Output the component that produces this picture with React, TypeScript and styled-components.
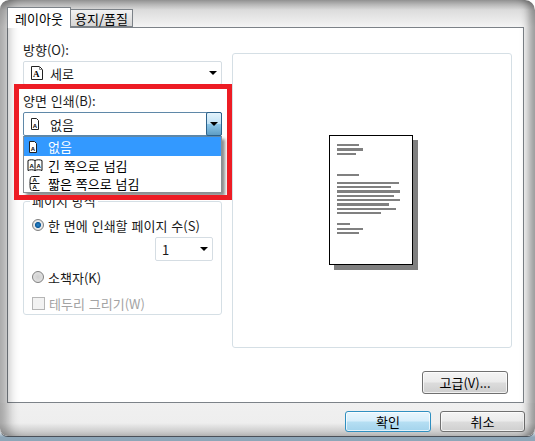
import React from "react";
import styled, { createGlobalStyle } from "styled-components";

const GlobalStyle = createGlobalStyle`
  html, body {
    margin: 0;
    padding: 0;
    background: #fff;
  }
  body {
    font-family: "Noto Sans CJK KR", "Noto Sans", sans-serif;
    font-size: 13px;
    word-spacing: 1px;
    color: #1a1a1a;
  }
`;

const Page = styled.div`
  position: relative;
  width: 535px;
  height: 441px;
  overflow: hidden;
  background: linear-gradient(to bottom, #ffffff 430px, #8ea6b8 437px);
`;

const Window = styled.div`
  position: relative;
  display: flex;
  flex-direction: column;
  width: 535px;
  height: 437px;
  box-sizing: border-box;
  padding: 7px 11px 0 7px;
  border-radius: 9px 10px 8px 8px;
  border-bottom: 1px solid #4a5058;
  background: linear-gradient(to bottom, #989898 0, #dcdcdc 10px, #f4f4f4 27px);
  overflow: hidden;

  &::after {
    content: "";
    position: absolute;
    inset: 0;
    pointer-events: none;
    border-radius: inherit;
    box-shadow:
      inset 16px 0 12px -8px rgba(0, 0, 0, 0.32),
      inset -12px 0 8px -6px rgba(0, 0, 0, 0.38);
  }
`;

const TabBar = styled.div`
  display: flex;
  align-items: flex-end;
  height: 20px;
`;

const Tab = styled.div<{ $active?: boolean }>`
  display: flex;
  align-items: center;
  justify-content: center;
  box-sizing: border-box;
  width: ${(p) => (p.$active ? "64px" : "62px")};
  height: ${(p) => (p.$active ? "21px" : "18px")};
  margin-bottom: ${(p) => (p.$active ? "-1px" : "0")};
  border: 1px solid #7c8288;
  border-bottom: ${(p) => (p.$active ? "none" : "1px solid #7c8288")};
  border-left: ${(p) => (p.$active ? "1px solid #7c8288" : "none")};
  background: ${(p) =>
    p.$active ? "#fff" : "linear-gradient(to bottom, #f2f2f2, #d6d6d6)"};
  color: #000;
  position: relative;
  z-index: ${(p) => (p.$active ? 1 : 0)};
`;

const Panel = styled.div`
  display: flex;
  gap: 10px;
  box-sizing: border-box;
  height: 376px;
  padding: 14px 11px 0 15px;
  background: #fff;
  border: 1px solid #7c8288;
`;

const LeftColumn = styled.div`
  display: flex;
  flex-direction: column;
  width: 199px;
`;

const RightColumn = styled.div`
  display: flex;
  flex-direction: column;
  align-items: flex-end;
  width: 280px;
  padding-top: 11px;
`;

const FieldLabel = styled.div`
  height: 16px;
  line-height: 16px;
  margin-bottom: 3px;
`;

const Field = styled.div`
  margin-bottom: 8px;
`;

const SelectBox = styled.div<{ $open?: boolean; $w?: number }>`
  position: relative;
  display: flex;
  align-items: center;
  box-sizing: border-box;
  width: ${(p) => (p.$w ? `${p.$w}px` : "100%")};
  height: 24px;
  padding-left: 6px;
  gap: 6px;
  background: #fff;
  border: 1px solid ${(p) => (p.$open ? "#5f88a8" : "#d5dde3")};
  border-radius: 2px;
`;

const Arrow = styled.span`
  position: absolute;
  right: 4px;
  top: 9px;
  width: 0;
  height: 0;
  border-left: 4px solid transparent;
  border-right: 4px solid transparent;
  border-top: 4px solid #000;
`;

const ArrowButton = styled.span`
  position: absolute;
  right: -1px;
  top: -1px;
  bottom: -1px;
  width: 16px;
  box-sizing: border-box;
  border: 1px solid #2c628b;
  border-radius: 2px;
  background: linear-gradient(to bottom, #e3f3fc 0, #c1e2f5 48%, #8cc6e8 52%, #5e9dc4 100%);

  &::after {
    content: "";
    position: absolute;
    left: 3px;
    top: 9px;
    border-left: 4px solid transparent;
    border-right: 4px solid transparent;
    border-top: 4px solid #000;
  }
`;

const DropList = styled.div`
  position: absolute;
  z-index: 2;
  left: -1px;
  top: 23px;
  width: 199px;
  box-sizing: border-box;
  background: #fff;
  border: 1px solid #8a8f94;
  border-top-color: #5f88a8;
  box-shadow: 3px 3px 3px rgba(0, 0, 0, 0.45);
`;

const DropItem = styled.div<{ $selected?: boolean }>`
  display: flex;
  align-items: center;
  height: ${(p) => (p.$selected ? "19px" : "18px")};
  background: ${(p) => (p.$selected ? "#3399ff" : "transparent")};
  color: ${(p) => (p.$selected ? "#fff" : "#000")};
`;

const ItemIcon = styled.span`
  display: flex;
  justify-content: center;
  width: 21px;
  margin-right: 3px;
`;

const Group = styled.div`
  position: relative;
  box-sizing: border-box;
  height: 114px;
  margin-top: 65px;
  padding: 15px 8px 0;
  border: 1px solid #d5dfe5;
  border-radius: 3px;
`;

const Legend = styled.div`
  position: absolute;
  left: 6px;
  top: -9px;
  padding: 0 2px;
  background: #fff;
  line-height: 16px;
`;

const OptionRow = styled.div<{ $disabled?: boolean; $gap?: number }>`
  display: flex;
  align-items: center;
  gap: 4px;
  height: 16px;
  margin-top: ${(p) => p.$gap ?? 0}px;
  color: ${(p) => (p.$disabled ? "#a3a3a3" : "#1a1a1a")};
`;

const Radio = styled.span<{ $checked?: boolean }>`
  box-sizing: border-box;
  width: 12px;
  height: 12px;
  border-radius: 50%;
  border: 1px solid #7f7f7f;
  background: ${(p) =>
    p.$checked
      ? "radial-gradient(circle, #2a86cc 0, #0f5a99 38%, #e8e8e8 48%, #d8d8d8 100%)"
      : "radial-gradient(circle, #cfcfcf 0, #e8e8e8 100%)"};
`;

const Checkbox = styled.span`
  box-sizing: border-box;
  width: 13px;
  height: 13px;
  border: 1px solid #b5b5b5;
  background: #f2f2f2;
`;

const PagesRow = styled.div`
  display: flex;
  justify-content: flex-end;
  margin: 4px 0 0;
`;

const Preview = styled.div`
  display: flex;
  align-items: center;
  justify-content: center;
  box-sizing: border-box;
  width: 280px;
  height: 295px;
  margin-bottom: 23px;
  padding: 4px 0 0 3px;
  border: 1px solid #d5dfe5;
  border-radius: 3px;
`;

const Button = styled.button<{ $default?: boolean; $w?: number; $h?: number }>`
  box-sizing: border-box;
  width: ${(p) => p.$w ?? 86}px;
  height: ${(p) => p.$h ?? 21}px;
  padding: 0;
  font: inherit;
  color: #000;
  border: 1px solid ${(p) => (p.$default ? "#2f8fc0" : "#707070")};
  border-radius: 3px;
  background: ${(p) =>
    p.$default
      ? "linear-gradient(to bottom, #e8f6fd 0, #d6eefb 48%, #b6dff3 52%, #a3d3ec 100%)"
      : "linear-gradient(to bottom, #f4f4f4 0, #ebebeb 48%, #dcdcdc 52%, #cfcfcf 100%)"};
  box-shadow: inset 0 0 0 1px rgba(255, 255, 255, 0.7);
`;

const AdvancedRow = styled.div`
  margin-right: 4px;
`;

const Footer = styled.div`
  display: flex;
  justify-content: flex-end;
  gap: 9px;
  box-sizing: border-box;
  flex: 1;
  margin: 0 -11px 0 -7px;
  padding: 8px 10px 0 0;
  background: linear-gradient(to bottom, #f0f0f0 0, #eeeeee 20px, #b8b8b8 34px);
`;

const Highlight = styled.div`
  position: absolute;
  z-index: 3;
  left: 14px;
  top: 84px;
  width: 218px;
  height: 116px;
  box-sizing: border-box;
  border: 5px solid #ed1c24;
  pointer-events: none;
`;

const Letter = styled.text<{ $fill?: string; $size?: number }>`
  font-family: "Liberation Sans", sans-serif;
  font-weight: 700;
  font-size: ${(p) => p.$size ?? 6}px;
  fill: ${(p) => p.$fill ?? "#000"};
`;

const PortraitIcon = () => (
  <svg width="14" height="14" viewBox="0 0 14 14">
    <path d="M1.500.5h8l3 3v10h-11z" fill="#fff" stroke="#222" />
    <path d="M9.500.5v3h3" fill="none" stroke="#888" />
    <text x="3" y="11" fontFamily="Liberation Serif" fontWeight="700" fontSize="9">A</text>
  </svg>
);

const SinglePageIcon = () => (
  <svg width="14" height="12" viewBox="0 0 14 12">
    <path d="M1.500.5h5l2 2v9h-7z" fill="#fff" stroke="#222" />
    <Letter x="2.800" y="9.500">A</Letter>
  </svg>
);

const BookIcon = () => (
  <svg width="16" height="12" viewBox="0 0 16 12">
    <path d="M8 1.500C6 .5 3 .5 1 1.500v10c2-1 5-1 7 0 2-1 5-1 7 0v-10c-2-1-5-1-7 0zM8 1.500v10" fill="#fff" stroke="#111" />
    <Letter x="2.500" y="8.500">A</Letter>
    <Letter x="9.500" y="8.500">A</Letter>
  </svg>
);

const FlipIcon = () => (
  <svg width="11" height="15" viewBox="0 0 11 15">
    <path d="M10.500.5H3.500C1.500.5 1 2 1 7.500S1.500 14.500 3.500 14.500h7M1 7.500h9.500" fill="#fff" stroke="#111" />
    <Letter x="3.500" y="6">A</Letter>
    <Letter x="3.500" y="13">A</Letter>
  </svg>
);

const docLines = [
  { y: 9, w: 22, h: 2 },
  { y: 13, w: 26, h: 3 },
  { y: 18, w: 19, h: 2 },
  { y: 39, w: 22, h: 2 },
  { y: 47, w: 62, h: 2 },
  { y: 51, w: 54, h: 2 },
  { y: 55, w: 63, h: 3 },
  { y: 60, w: 57, h: 2 },
  { y: 64, w: 63, h: 2 },
  { y: 68, w: 52, h: 3 },
  { y: 73, w: 59, h: 2 },
  { y: 77, w: 44, h: 2 },
  { y: 88, w: 13, h: 2 },
  { y: 93, w: 26, h: 2 },
  { y: 97, w: 22, h: 2 },
];

const PaperPreview = () => (
  <svg width="89" height="135" viewBox="0 0 89 135">
    <rect x="5" y="5" width="84" height="130" fill="#808080" />
    <rect x="0.500" y="0.500" width="83" height="129" fill="#fff" stroke="#000" />
    {docLines.map((l) => (
      <rect key={l.y} x="8" y={l.y} width={l.w} height={l.h} fill="#808080" />
    ))}
  </svg>
);

export default function App() {
  return (
    <Page>
      <GlobalStyle />
      <Window>
        <TabBar>
          <Tab $active>레이아웃</Tab>
          <Tab>용지/품질</Tab>
        </TabBar>
        <Panel>
          <LeftColumn>
            <Field>
              <FieldLabel>방향(O):</FieldLabel>
              <SelectBox>
                <PortraitIcon />
                세로
                <Arrow />
              </SelectBox>
            </Field>
            <div>
              <FieldLabel>양면 인쇄(B):</FieldLabel>
              <SelectBox $open>
                <SinglePageIcon />
                없음
                <ArrowButton />
                <DropList>
                  <DropItem $selected>
                    <ItemIcon><SinglePageIcon /></ItemIcon>없음
                  </DropItem>
                  <DropItem>
                    <ItemIcon><BookIcon /></ItemIcon>긴 쪽으로 넘김
                  </DropItem>
                  <DropItem>
                    <ItemIcon><FlipIcon /></ItemIcon>짧은 쪽으로 넘김
                  </DropItem>
                </DropList>
              </SelectBox>
            </div>
            <Group>
              <Legend>페이지 방식</Legend>
              <OptionRow>
                <Radio $checked />한 면에 인쇄할 페이지 수(S)
              </OptionRow>
              <PagesRow>
                <SelectBox $w={58}>
                  1
                  <Arrow />
                </SelectBox>
              </PagesRow>
              <OptionRow $gap={8}>
                <Radio />소책자(K)
              </OptionRow>
              <OptionRow $gap={10} $disabled>
                <Checkbox />테두리 그리기(W)
              </OptionRow>
            </Group>
          </LeftColumn>
          <RightColumn>
            <Preview>
              <PaperPreview />
            </Preview>
            <AdvancedRow>
              <Button $h={23}>고급(V)...</Button>
            </AdvancedRow>
          </RightColumn>
        </Panel>
        <Footer>
          <Button $default>확인</Button>
          <Button $w={85}>취소</Button>
        </Footer>
        <Highlight />
      </Window>
    </Page>
  );
}
